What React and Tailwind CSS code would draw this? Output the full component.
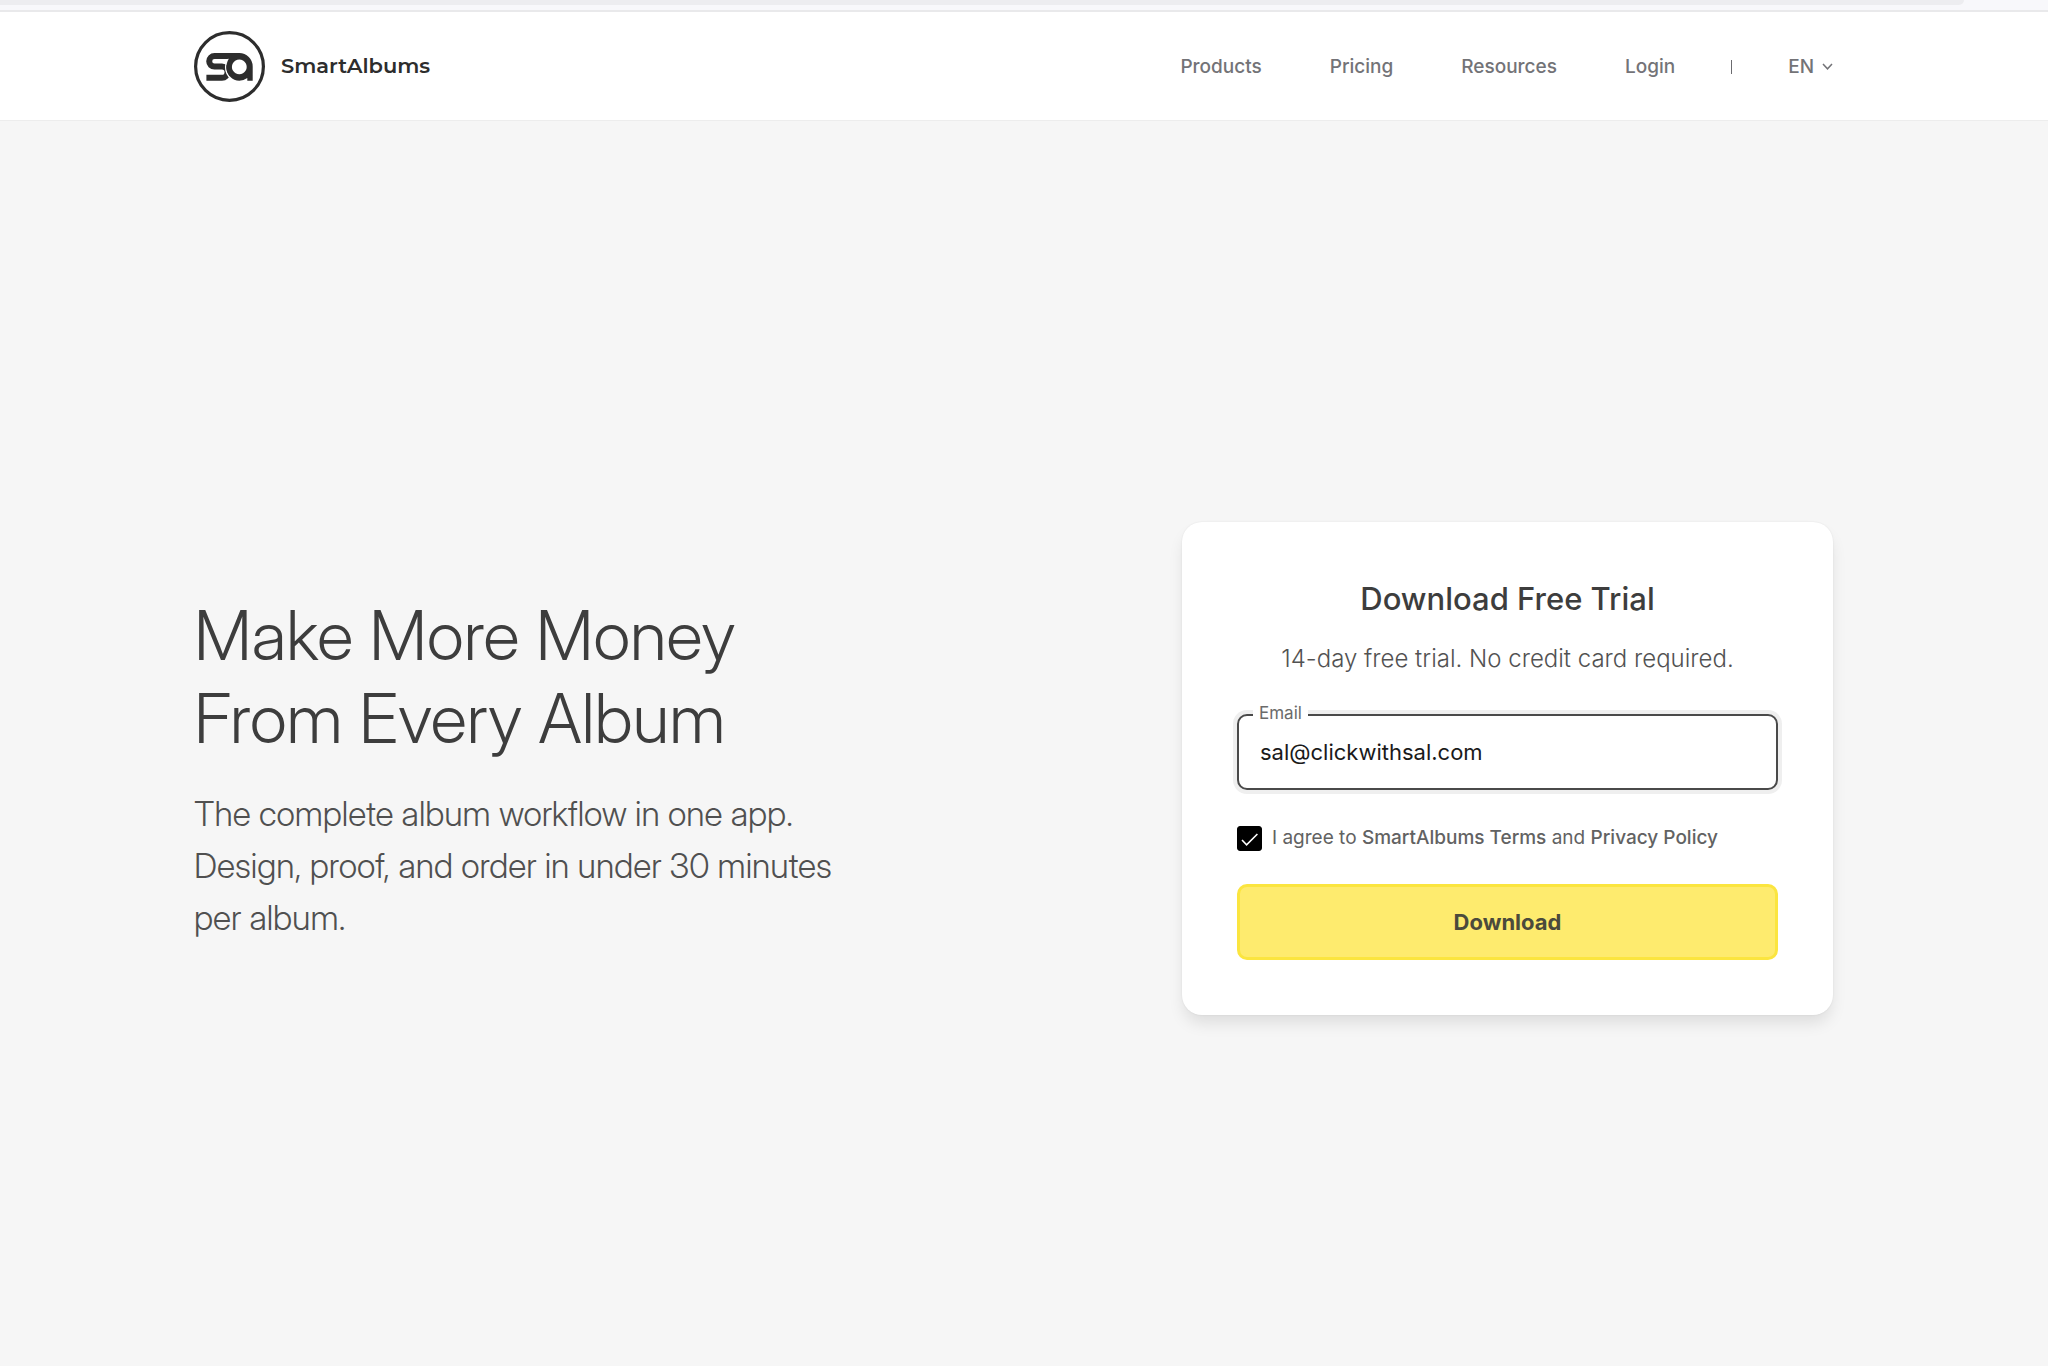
import { useState } from 'react'

//main navigation entries
const links = [
  { label: 'Products', href: '#products' },
  { label: 'Pricing', href: '#pricing' },
  { label: 'Resources', href: '#resources' },
  { label: 'Login', href: '#login' },
]

function Logo() {
  return (
    <a href="#home" className="flex items-center gap-4 text-[#2d2d2d]">
      <svg viewBox="0 0 71 71" className="size-[71px]" fill="none" aria-hidden="true">
        <circle cx="35.5" cy="35.5" r="33.9" stroke="currentColor" strokeWidth="3.2" />
        {/* s */}
        <path
          d="M46 25H20.5a5.3 5.3 0 0 0 0 10.6H28a5.5 5.5 0 0 1 0 11.1H12.4"
          stroke="currentColor"
          strokeWidth="6"
        />
        {/* gap between both letters */}
        <path d="M34.6 28a13.6 13.6 0 0 0 4.9 20.8" stroke="white" strokeWidth="1.4" />
        {/* a */}
        <path
          fillRule="evenodd"
          fill="currentColor"
          d="M45.3 22a13.4 13.4 0 0 1 13.4 13.4v14.3h-5.4v-2.6a13.5 13.5 0 0 1-8 2.6a12.8 13.8 0 0 1 0-27.7zM45.3 28.5a7.4 7.4 0 1 0 .01 0z"
        />
      </svg>
      <span className="font-['Montserrat','Lato',sans-serif] text-[21px] font-semibold">SmartAlbums</span>
    </a>
  )
}

function Header() {
  return (
    <header className="border-b border-[#ededed] bg-white pr-[21px]">
      <div className="mx-auto flex h-[108px] w-full max-w-[1639px] items-center justify-between">
        <Logo />
        <nav className="flex items-center pt-0.5 text-[19px] font-medium text-[#737377]">
          <div className="flex gap-[68px]">
            {links.map(item => (
              <a key={item.label} href={item.href}>{item.label}</a>
            ))}
          </div>
          <span className="mx-[56px] h-[14px] w-px bg-[#6b6b6f]" />
          <button type="button" className="flex items-center gap-2">
            EN
            <svg viewBox="0 0 11 8" className="h-2 w-[11px]" fill="none" stroke="currentColor" strokeWidth="1.5" aria-hidden="true">
              <path d="M1 1l4.5 4.8L10 1" />
            </svg>
          </button>
        </nav>
      </div>
    </header>
  )
}

function TrialForm() {
  const [email, setEmail] = useState('sal@clickwithsal.com')
  const [agreed, setAgreed] = useState(true)

  return (
    <form
      className="w-[651px] rounded-[20px] bg-white p-[55px] shadow-[0_0_2px_rgba(0,0,0,0.08),0_10px_16px_-2px_rgba(0,0,0,0.1)]"
      onSubmit={e => e.preventDefault()}
    >
      <h2 className="text-center text-[31px] leading-[44px] font-medium text-[#3d3d3d]">Download Free Trial</h2>
      <p className="mt-[18px] text-center text-[24px] leading-[40px] font-light text-[#525252]">
        14-day free trial. No credit card required.
      </p>

      <div className="relative mt-[35px]">
        <input
          id="email"
          type="email"
          value={email}
          onChange={e => setEmail(e.target.value)}
          className="h-[76px] w-full rounded-[10px] border-2 border-[#4a4a4a] bg-white px-[21px] text-[22px] text-[#1a1a1a] ring-4 ring-[#efefef] outline-none"
        />
        <label htmlFor="email" className="absolute -top-3 left-4 bg-white px-[6px] text-[17px] leading-[22px] text-[#6b6b6b]">
          Email
        </label>
      </div>

      <div className="mt-[34px] flex items-center gap-[10px] text-[19px] leading-[28px] text-[#626262]">
        <span className="relative size-[25px]">
          <input
            id="agree"
            type="checkbox"
            checked={agreed}
            onChange={e => setAgreed(e.target.checked)}
            className="block size-[25px] appearance-none rounded-[3px] border border-black checked:bg-black"
          />
          {agreed && (
            <svg viewBox="0 0 25 25" className="pointer-events-none absolute inset-0" fill="none" stroke="white" strokeWidth="1.6" aria-hidden="true">
              <path d="M5 14l4.6 4.8L20.4 8" />
            </svg>
          )}
        </span>
        <label htmlFor="agree">
          I agree to <a href="#terms" className="font-medium">SmartAlbums Terms</a> and{' '}
          <a href="#privacy" className="font-medium">Privacy Policy</a>
        </label>
      </div>

      <button
        type="submit"
        className="mt-[32px] h-[76px] w-full rounded-[10px] border-3 border-[#fbe53f] bg-[#feeb6e] text-[22px] font-bold text-[#4b4a3c]"
      >
        Download
      </button>
    </form>
  )
}

export default function App() {
  return (
    <div className="flex min-h-screen flex-col bg-[#f6f6f6] font-['Inter',sans-serif]">
      {/* bottom edge of the toolbar */}
      <div className="border-b-2 border-[#e9e9eb] bg-[#f8f8fb] pb-[5px]">
        <div className="mr-[84px] h-[5px] rounded-br-[5px] bg-[#ededf0]" />
      </div>
      <Header />
      <main className="flex flex-1 items-center pt-[50px] pr-[21px]">
        <div className="mx-auto flex w-full max-w-[1639px] items-center justify-between">
          <section className="font-['Inter_Display','Inter_Tight','Inter',sans-serif] font-light">
            <h1 className="text-[68px] leading-[83px] text-[#3d3d3d]">
              Make More Money
              <br />
              From Every Album
            </h1>
            <p className="mt-7 max-w-[680px] text-[34px] leading-[52px] text-[#505050]">
              The complete album workflow in one app. Design, proof, and order in under 30 minutes per album.
            </p>
          </section>
          <TrialForm />
        </div>
      </main>
    </div>
  )
}
